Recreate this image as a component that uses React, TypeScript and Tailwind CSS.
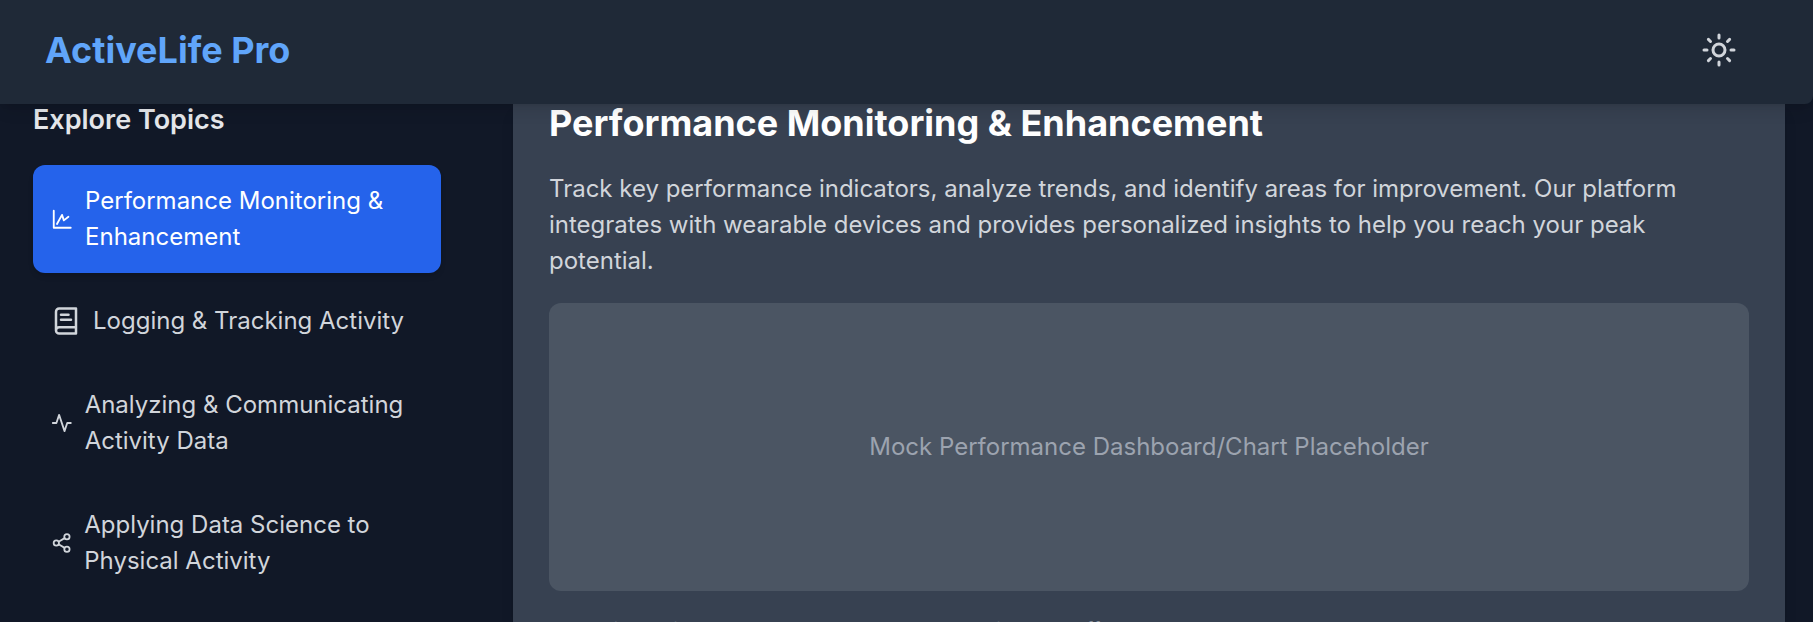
import React, { useState } from 'react';
import { Sun } from 'lucide-react';

interface IconProps {
  className?: string;
}

const Icon: React.FC<IconProps & { children: React.ReactNode }> = ({ className, children }) => (
  <svg
    viewBox="0 0 24 24"
    fill="none"
    stroke="currentColor"
    strokeWidth="2"
    strokeLinecap="round"
    strokeLinejoin="round"
    aria-hidden="true"
    className={className}
  >
    {children}
  </svg>
);

const ChartIcon: React.FC<IconProps> = ({ className }) => (
  <Icon className={className}>
    <path d="M3 3v18.5h18.5" />
    <path d="M6.5 17.5l5.5-10 2 6 5-4" />
  </Icon>
);

const BookIcon: React.FC<IconProps> = ({ className }) => (
  <Icon className={className}>
    <path d="M4 19.5v-15A2.5 2.5 0 0 1 6.5 2H20v20H6.5a2.5 2.5 0 0 1 0-5H20" />
    <path d="M8 7h6" />
    <path d="M8 11h8" />
  </Icon>
);

const ActivityIcon: React.FC<IconProps> = ({ className }) => (
  <Icon className={className}>
    <path d="M22 12h-4l-3 9L9 3l-3 9H2" />
  </Icon>
);

const ShareIcon: React.FC<IconProps> = ({ className }) => (
  <Icon className={className}>
    <circle cx="18" cy="5" r="3" />
    <circle cx="6" cy="12" r="3" />
    <circle cx="18" cy="19" r="3" />
    <path d="M8.6 13.5l6.8 4M15.4 6.5l-6.8 4" />
  </Icon>
);

const topics = [
  { id: 'performance', title: 'Performance Monitoring & Enhancement', icon: ChartIcon },
  { id: 'logging', title: 'Logging & Tracking Activity', icon: BookIcon },
  { id: 'analyzing', title: 'Analyzing & Communicating Activity Data', icon: ActivityIcon },
  { id: 'science', title: 'Applying Data Science to Physical Activity', icon: ShareIcon },
];

export default function App() {
  const [active, setActive] = useState('performance');

  return (
    <div className="h-screen flex flex-col overflow-hidden bg-gray-900 font-['Inter',sans-serif] text-[24px] leading-[36px] text-[#d1d5db]">
      {/* Header */}
      <header className="relative z-10 shrink-0 flex items-center justify-between bg-[#1f2937] pt-5 pb-6 pl-[45px] pr-16 rounded-br-lg shadow-lg">
        <h1 className="text-[36px] leading-[48px] font-bold text-[#60a5fa]">ActiveLife Pro</h1>
        <button aria-label="Toggle theme" className="p-3 rounded-full">
          <Sun size={36} />
        </button>
      </header>

      <div className="flex-1 min-h-0 flex bg-[#111827] pl-[33px] pr-7 gap-[72px]">
        {/* Sidebar */}
        <aside className="w-[408px] shrink-0">
          <h2 className="text-[27px] leading-[32px] font-semibold text-[#e5e7eb] mb-[29px]">Explore Topics</h2>
          <nav className="flex flex-col gap-3">
            {topics.map(({ id, title, icon: TopicIcon }) => (
              <button
                key={id}
                onClick={() => setActive(id)}
                className={`flex items-center w-full p-[18px] rounded-xl text-left ${
                  active === id ? 'bg-[#2563eb] text-white shadow-md' : ''
                }`}
              >
                <TopicIcon className="w-[30px] h-[30px] min-w-0 mr-3" />
                <span>{title}</span>
              </button>
            ))}
          </nav>
        </aside>

        {/* Content */}
        <main className="flex-1 min-w-0 bg-[#374151] px-9 shadow-lg">
          <h2 className="text-[36px] leading-[38px] font-bold text-white mb-[29px]">
            Performance Monitoring & Enhancement
          </h2>
          <p className="mb-6">
            Track key performance indicators, analyze trends, and identify areas for improvement. Our platform
            integrates with wearable devices and provides personalized insights to help you reach your peak potential.
          </p>
          <div className="h-[288px] flex items-center justify-center rounded-xl bg-[#4b5563] text-[#9ca3af] mb-6">
            Mock Performance Dashboard/Chart Placeholder
          </div>
          <p className="text-[21px] leading-[32px] text-[#9ca3af]">
            Expertise guide: NSCA resources on sport science staff
          </p>
        </main>
      </div>
    </div>
  );
}
